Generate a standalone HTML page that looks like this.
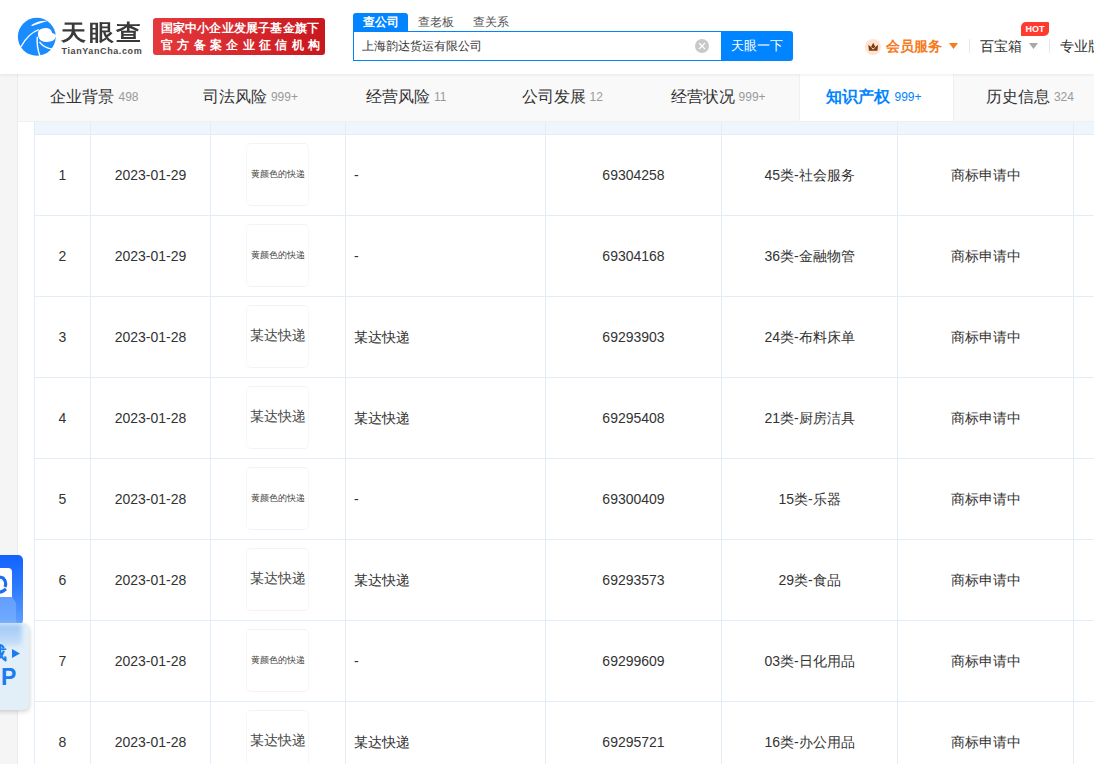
<!DOCTYPE html>
<html><head><meta charset="utf-8">
<style>
*{margin:0;padding:0;box-sizing:border-box}
html,body{width:1094px;height:764px;overflow:hidden;background:#f5f5f5;font-family:"Liberation Sans",sans-serif;color:#333}
body{position:relative}
.abs{position:absolute}
#hdr{position:absolute;left:0;top:0;width:1094px;height:74px;background:#fff;box-shadow:0 1px 3px rgba(0,0,0,.07);z-index:5}
#side{position:absolute;left:17px;top:74px;width:1px;height:690px;background:#ebebeb}
#tabs{position:absolute;left:18px;top:74px;width:1076px;height:47px;background:#f9f9f9}
.tab{position:absolute;top:0;height:47px;width:156px;padding-right:3px;text-align:center;line-height:45px;font-size:16px;color:#333;white-space:nowrap}
.tab span{font-size:12px;color:#999;margin-left:4px;position:relative;top:-1.5px}
.tab.act{background:#fff;color:#0084ff;font-weight:bold;border-left:1px solid #f0f0f0;border-right:1px solid #f0f0f0;width:155px;padding-right:4px;margin-left:1px;line-height:45px}
.tab.act span{color:#0084ff;font-weight:normal}
#content{position:absolute;left:18px;top:121px;width:1076px;height:643px;background:#fff}
#thead{position:absolute;left:34px;top:122px;width:1060px;height:12px;background:#eef5fc}
.vl{position:absolute;top:122px;width:1px;height:642px;background:#e3edf8}
.hl{position:absolute;left:34px;width:1060px;height:1px;background:#e3edf8}
.cell{position:absolute;height:81px;line-height:81px;font-size:14px;color:#333;white-space:nowrap}
.c{text-align:center}
.logo{position:absolute;width:63px;height:63px;border:1px solid #f3f3f3;border-left-color:#f7f7f7;border-right-color:#f7f7f7;border-radius:5px;background:#fff;text-align:center}
</style></head><body>
<div id="hdr">
<svg width="45" height="45" viewBox="0 0 764 764" style="position:absolute;left:15px;top:15px">
<circle cx="370" cy="370" r="322" fill="#1a8cff"/>
<path d="M388 310 Q392 232 520 222 Q612 220 628 300 L700 338 Q690 430 600 452 Q500 470 440 432 Q388 395 388 310 Z" fill="#fff"/>
<path d="M272 172 Q400 90 552 100 Q430 135 292 186 Z" fill="#fff"/>
<path d="M100 540 Q230 310 405 250" stroke="#fff" stroke-width="22" fill="none"/>
<path d="M378 370 Q365 560 428 705" stroke="#fff" stroke-width="24" fill="none"/>
<path d="M415 458 Q480 555 632 580" stroke="#fff" stroke-width="24" fill="none"/>
</svg>
<div class="abs" style="left:61px;top:17px;font-size:25px;font-weight:bold;color:#3b3838;letter-spacing:2.6px;line-height:30px;transform:scaleY(0.88);transform-origin:0 50%">天眼查</div>
<div class="abs" style="left:61.5px;top:45px;font-size:9px;font-weight:bold;color:#4a4747;letter-spacing:0.6px;line-height:12px">TianYanCha.com</div>
<div class="abs" style="left:153px;top:18px;width:172px;height:37px;border-radius:3px;background:linear-gradient(90deg,#e5393c,#c8181e)"></div>
<div class="abs" style="left:160.5px;top:20px;width:158px;font-size:12px;line-height:17px;color:#fff;white-space:nowrap;letter-spacing:0.22px;font-weight:bold">国家中小企业发展子基金旗下</div>
<div class="abs" style="left:161px;top:37px;width:170px;font-size:12px;line-height:17px;color:#fff;white-space:nowrap;letter-spacing:4.35px;font-weight:bold">官方备案企业征信机构</div>
<div class="abs" style="left:353px;top:13px;width:55px;height:19px;background:#0084ff;border-radius:3px 3px 0 0;color:#fff;font-size:12px;font-weight:bold;text-align:center;line-height:18px">查公司</div>
<div class="abs" style="left:418px;top:13px;font-size:12px;color:#555;line-height:18px">查老板</div>
<div class="abs" style="left:473px;top:13px;font-size:12px;color:#555;line-height:18px">查关系</div>
<div class="abs" style="left:353px;top:31px;width:369px;height:30px;border:1px solid #0084ff;border-right:none;background:#fff"></div>
<div class="abs" style="left:362px;top:37px;font-size:12px;line-height:18px;color:#333">上海韵达货运有限公司</div>
<div class="abs" style="left:695px;top:38.5px;width:14px;height:14px;border-radius:50%;background:#c8c8c8"></div>
<svg class="abs" style="left:695px;top:38.5px" width="14" height="14"><path d="M4 4L10 10M10 4L4 10" stroke="#fff" stroke-width="1.2"/></svg>
<div class="abs" style="left:721px;top:31px;width:72px;height:30px;background:#0084ff;border-radius:0 3px 3px 0;color:#fff;font-size:13px;text-align:center;line-height:30px">天眼一下</div>
<div class="abs" style="left:865px;top:39px;width:16px;height:16px;border-radius:50%;background:#fde3d0"></div>
<svg class="abs" style="left:865px;top:39px" width="16" height="16"><path d="M3.3 5.8 L6 8 L8.2 3.8 L10.4 8 L13.1 5.8 L12.4 11.7 L4 11.7 Z" fill="#7d3c12"/><path d="M6.6 8.4 L8.2 10.2 L9.8 8.4" stroke="#fde3d0" stroke-width="1" fill="none"/></svg>
<div class="abs" style="left:886px;top:37px;font-size:14px;font-weight:bold;color:#f77a1d;line-height:18px">会员服务</div>
<svg class="abs" style="left:949px;top:43px" width="9" height="6"><path d="M0 0H9L4.5 6Z" fill="#f77a1d"/></svg>
<div class="abs" style="left:969px;top:39px;width:1px;height:14px;background:#e8e8e8"></div>
<div class="abs" style="left:980px;top:37px;font-size:14px;color:#333;line-height:18px">百宝箱</div>
<svg class="abs" style="left:1029px;top:43px" width="9" height="6"><path d="M0 0H9L4.5 6Z" fill="#a8a8a8"/></svg>
<div class="abs" style="left:1021px;top:22px;width:28px;height:14px;background:#ff3b30;border-radius:5px 1px 5px 0;color:#fff;font-size:9px;font-weight:bold;text-align:center;line-height:14px">HOT</div>
<div class="abs" style="left:1049px;top:39px;width:1px;height:14px;background:#e8e8e8"></div>
<div class="abs" style="left:1060px;top:37px;font-size:14px;color:#333;line-height:18px;white-space:nowrap">专业版</div>
</div>
<div id="side"></div>
<div id="tabs"><div class="tab" style="left:0.0px">企业背景<span>498</span></div><div class="tab" style="left:155.9px">司法风险<span>999+</span></div><div class="tab" style="left:311.8px">经营风险<span>11</span></div><div class="tab" style="left:467.7px">公司发展<span>12</span></div><div class="tab" style="left:623.6px">经营状况<span>999+</span></div><div class="tab act" style="left:779.5px">知识产权<span>999+</span></div><div class="tab" style="left:935.4px">历史信息<span>324</span></div></div>
<div id="content"></div>
<div id="thead"></div>
<div class="hl" style="top:134px"></div><div class="hl" style="top:215px"></div><div class="hl" style="top:296px"></div><div class="hl" style="top:377px"></div><div class="hl" style="top:458px"></div><div class="hl" style="top:539px"></div><div class="hl" style="top:620px"></div><div class="hl" style="top:701px"></div><div class="hl" style="top:782px"></div><div class="abs" style="left:18px;top:121px;width:1076px;height:1px;background:#efefef"></div><div class="vl" style="left:34px"></div><div class="vl" style="left:90px"></div><div class="vl" style="left:210px"></div><div class="vl" style="left:345px"></div><div class="vl" style="left:545px"></div><div class="vl" style="left:721px"></div><div class="vl" style="left:897px"></div><div class="vl" style="left:1073px"></div><div class="cell c" style="left:35px;top:135px;width:55px">1</div><div class="cell c" style="left:91px;top:135px;width:119px">2023-01-29</div><div class="logo" style="left:246px;top:143px"><div style="font-family:'Liberation Serif',serif;font-size:8.8px;color:#444;line-height:61px;white-space:nowrap;letter-spacing:0">黄颜色的快递</div></div><div class="cell" style="left:354px;top:135px">-</div><div class="cell c" style="left:546px;top:135px;width:175px">69304258</div><div class="cell c" style="left:722px;top:135px;width:175px">45类-社会服务</div><div class="cell c" style="left:898px;top:135px;width:175px">商标申请中</div><div class="cell c" style="left:35px;top:216px;width:55px">2</div><div class="cell c" style="left:91px;top:216px;width:119px">2023-01-29</div><div class="logo" style="left:246px;top:224px"><div style="font-family:'Liberation Serif',serif;font-size:8.8px;color:#444;line-height:61px;white-space:nowrap;letter-spacing:0">黄颜色的快递</div></div><div class="cell" style="left:354px;top:216px">-</div><div class="cell c" style="left:546px;top:216px;width:175px">69304168</div><div class="cell c" style="left:722px;top:216px;width:175px">36类-金融物管</div><div class="cell c" style="left:898px;top:216px;width:175px">商标申请中</div><div class="cell c" style="left:35px;top:297px;width:55px">3</div><div class="cell c" style="left:91px;top:297px;width:119px">2023-01-28</div><div class="logo" style="left:246px;top:305px"><div style="font-family:'Liberation Serif',serif;font-size:13.5px;color:#4a4a4a;line-height:59px;white-space:nowrap">某达快递</div></div><div class="cell" style="left:354px;top:297px">某达快递</div><div class="cell c" style="left:546px;top:297px;width:175px">69293903</div><div class="cell c" style="left:722px;top:297px;width:175px">24类-布料床单</div><div class="cell c" style="left:898px;top:297px;width:175px">商标申请中</div><div class="cell c" style="left:35px;top:378px;width:55px">4</div><div class="cell c" style="left:91px;top:378px;width:119px">2023-01-28</div><div class="logo" style="left:246px;top:386px"><div style="font-family:'Liberation Serif',serif;font-size:13.5px;color:#4a4a4a;line-height:59px;white-space:nowrap">某达快递</div></div><div class="cell" style="left:354px;top:378px">某达快递</div><div class="cell c" style="left:546px;top:378px;width:175px">69295408</div><div class="cell c" style="left:722px;top:378px;width:175px">21类-厨房洁具</div><div class="cell c" style="left:898px;top:378px;width:175px">商标申请中</div><div class="cell c" style="left:35px;top:459px;width:55px">5</div><div class="cell c" style="left:91px;top:459px;width:119px">2023-01-28</div><div class="logo" style="left:246px;top:467px"><div style="font-family:'Liberation Serif',serif;font-size:8.8px;color:#444;line-height:61px;white-space:nowrap;letter-spacing:0">黄颜色的快递</div></div><div class="cell" style="left:354px;top:459px">-</div><div class="cell c" style="left:546px;top:459px;width:175px">69300409</div><div class="cell c" style="left:722px;top:459px;width:175px">15类-乐器</div><div class="cell c" style="left:898px;top:459px;width:175px">商标申请中</div><div class="cell c" style="left:35px;top:540px;width:55px">6</div><div class="cell c" style="left:91px;top:540px;width:119px">2023-01-28</div><div class="logo" style="left:246px;top:548px"><div style="font-family:'Liberation Serif',serif;font-size:13.5px;color:#4a4a4a;line-height:59px;white-space:nowrap">某达快递</div></div><div class="cell" style="left:354px;top:540px">某达快递</div><div class="cell c" style="left:546px;top:540px;width:175px">69293573</div><div class="cell c" style="left:722px;top:540px;width:175px">29类-食品</div><div class="cell c" style="left:898px;top:540px;width:175px">商标申请中</div><div class="cell c" style="left:35px;top:621px;width:55px">7</div><div class="cell c" style="left:91px;top:621px;width:119px">2023-01-28</div><div class="logo" style="left:246px;top:629px"><div style="font-family:'Liberation Serif',serif;font-size:8.8px;color:#444;line-height:61px;white-space:nowrap;letter-spacing:0">黄颜色的快递</div></div><div class="cell" style="left:354px;top:621px">-</div><div class="cell c" style="left:546px;top:621px;width:175px">69299609</div><div class="cell c" style="left:722px;top:621px;width:175px">03类-日化用品</div><div class="cell c" style="left:898px;top:621px;width:175px">商标申请中</div><div class="cell c" style="left:35px;top:702px;width:55px">8</div><div class="cell c" style="left:91px;top:702px;width:119px">2023-01-28</div><div class="logo" style="left:246px;top:710px"><div style="font-family:'Liberation Serif',serif;font-size:13.5px;color:#4a4a4a;line-height:59px;white-space:nowrap">某达快递</div></div><div class="cell" style="left:354px;top:702px">某达快递</div><div class="cell c" style="left:546px;top:702px;width:175px">69295721</div><div class="cell c" style="left:722px;top:702px;width:175px">16类-办公用品</div><div class="cell c" style="left:898px;top:702px;width:175px">商标申请中</div>

<div class="abs" style="left:-6px;top:555px;width:29px;height:70px;border-radius:5px;background:linear-gradient(180deg,#1262ff 0%,#2f7cff 50%,#5fa2ff 100%);z-index:6"></div>
<div class="abs" style="left:-6px;top:596px;width:22px;height:28px;background:linear-gradient(180deg,rgba(255,255,255,.22),rgba(255,255,255,.12));clip-path:polygon(0 0,80% 0,100% 25%,100% 100%,0 100%);z-index:6"></div>
<div class="abs" style="left:-6px;top:568px;width:18px;height:29px;border-radius:4px 4px 0 0;background:#fff;z-index:6"></div>
<svg class="abs" style="left:-12px;top:574px;z-index:7" width="20" height="22" viewBox="0 0 20 22"><path d="M4 7 Q9 1 15 4 Q19 8 17 13" stroke="#1a6ff0" stroke-width="3.2" fill="none"/><path d="M5 16 Q11 21 18 15" stroke="#1a6ff0" stroke-width="3" fill="none"/></svg>
<div class="abs" style="left:-10px;top:623px;width:39px;height:87px;border-radius:6px;background:#e2eff9;box-shadow:1px 2px 4px rgba(0,0,0,.16);z-index:8"></div>
<div class="abs" style="left:-6px;top:624px;width:28px;height:22px;border-radius:4px;background:linear-gradient(180deg,#9fc8f6,#c9e0f8);filter:blur(2px);z-index:8"></div>
<div class="abs" style="left:-11px;top:642px;font-size:18px;font-weight:bold;color:#1a7cf0;z-index:9;line-height:22px">载</div>
<svg class="abs" style="left:12px;top:649px;z-index:9" width="8" height="9"><path d="M0 0L8 4.5L0 9Z" fill="#1a7cf0"/></svg>
<div class="abs" style="left:1px;top:663.5px;font-size:23px;font-weight:bold;color:#1a7cf0;z-index:9;line-height:26px">P</div>

</body></html>
